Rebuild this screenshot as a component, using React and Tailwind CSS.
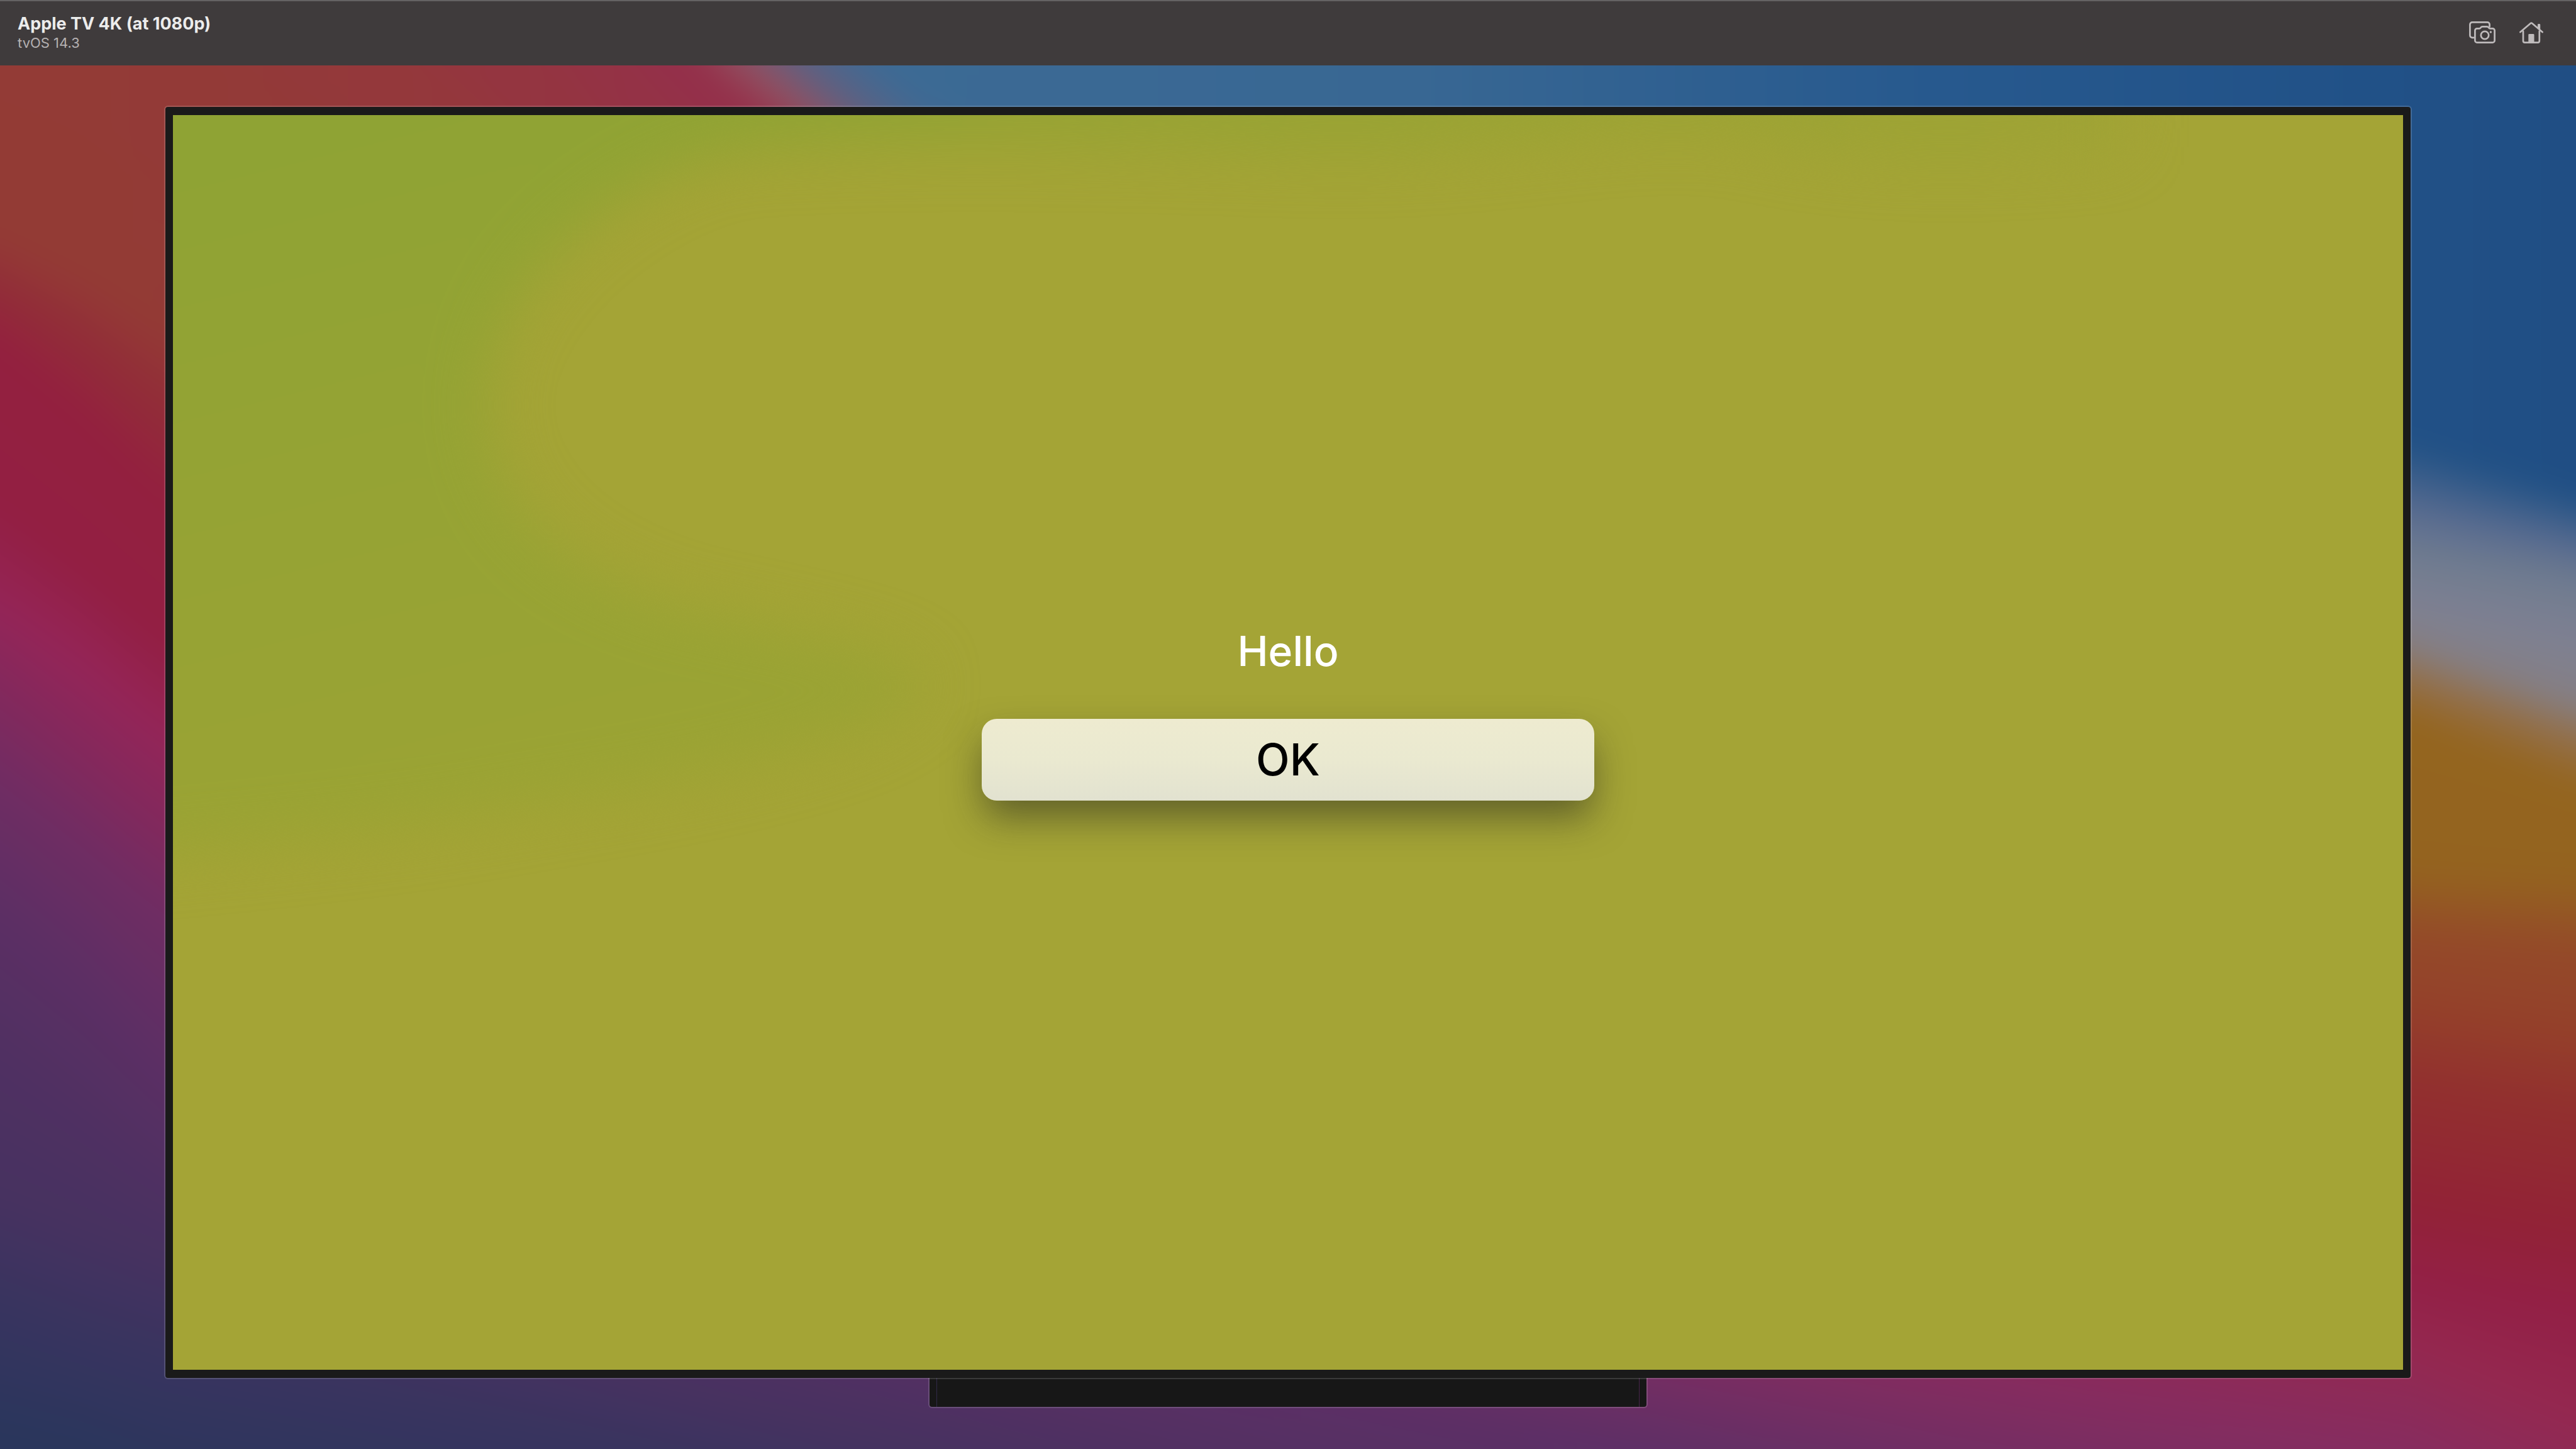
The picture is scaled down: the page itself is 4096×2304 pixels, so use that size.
import React from "react";

/* x positions at which every wallpaper contour has a height */
const COLUMNS = [-300, 0, 130, 261, 1150, 1475, 2620, 3835, 4096, 4400];

/* Each contour: heights at the columns between the outer two, then its
   colour at the left, in the middle and at the right. */
const CONTOURS = [
  [[-900, -900, -900, -109, 168, 500, 700, 785], "#3f6a94", "#3f6a94", "#225285"],
  [[-900, -900, -900, -11, 265, 560, 808, 868], "#5f6080", "#5f6080", "#5a6c90"],
  [[-900, -900, -900, 65, 341, 600, 880, 925], "#933c37", "#945060", "#707c8f"],
  [[-900, -900, -900, 133, 409, 650, 957, 1010], "#933c37", "#94304a", "#7e8092"],
  [[-900, -900, -900, 134, 410, 700, 1020, 1112], "#933c37", "#94304a", "#857f84"],
  [[-900, -900, -900, 135, 411, 750, 1075, 1172], "#933c37", "#94304a", "#936f4a"],
  [[-900, -900, -900, 136, 412, 800, 1140, 1245], "#933c37", "#94304a", "#94651f"],
  [[-900, -900, -900, 137, 413, 900, 1375, 1385], "#933c37", "#94304a", "#94631f"],
  [[-900, -900, -900, 138, 414, 1000, 1480, 1500], "#933c37", "#94304a", "#944a29"],
  [[370, 430, 510, 700, 800, 1250, 1600, 1640], "#933b35", "#933a34", "#943f2a"],
  [[450, 530, 635, 900, 1000, 1400, 1716, 1759], "#922d38", "#922d38", "#922f2f"],
  [[540, 650, 780, 1100, 1200, 1600, 1900, 1945], "#93203f", "#93203f", "#922236"],
  [[800, 900, 1010, 1350, 1450, 1850, 2026, 2078], "#931f43", "#931f43", "#932046"],
  [[960, 1050, 1160, 1550, 1650, 1980, 2134, 2240], "#942558", "#942558", "#942850"],
  [[1070, 1180, 1290, 1700, 1820, 2080, 2300, 2430], "#84285c", "#84285c", "#862d60"],
  [[1240, 1340, 1450, 1850, 1970, 2200, 2480, 2600], "#6e2d63", "#6e2d63", "#702f64"],
  [[1430, 1540, 1680, 1990, 2090, 2310, 2600, 2700], "#5c2f64", "#5c2f64", "#5c3068"],
  [[1650, 1750, 1860, 2120, 2210, 2500, 2800, 2900], "#503062", "#503062", "#503062"],
  [[1900, 1950, 2000, 2230, 2300, 2620, 2900, 3000], "#463260", "#463260", "#463260"],
  [[2060, 2110, 2150, 2330, 2420, 2700, 3000, 3100], "#38345f", "#38345f", "#38345f"],
  [[2260, 2290, 2340, 2500, 2600, 2800, 3100, 3200], "#2a365c", "#2a365c", "#2a365c"],
];

const STEPS = 6;

const mix = (a, b, t) => a + (b - a) * t;

function mixColor(a, b, t) {
  const part = (hex, i) => parseInt(hex.slice(i, i + 2), 16);
  const out = [1, 3, 5].map((i) => Math.round(mix(part(a, i), part(b, i), t)));
  return `rgb(${out.join(",")})`;
}

function buildBands() {
  const bands = [];
  CONTOURS.forEach((to, i) => {
    const from = CONTOURS[Math.max(i - 1, 0)];
    for (let s = 1; s <= STEPS; s++) {
      const t = s / STEPS;
      const inner = to[0].map((y, k) => mix(from[0][k], y, t));
      const ys = [inner[0] - 80, ...inner, inner[7] + 60];
      bands.push({
        d: `M-300 3400 ${ys.map((y, k) => `L${COLUMNS[k]} ${Math.round(y)}`).join(" ")} L4400 3400Z`,
        colors: [1, 2, 3].map((c) => mixColor(from[c], to[c], t)),
      });
    }
  });
  return bands;
}

const BANDS = buildBands();

function Wallpaper() {
  return (
    <svg
      className="absolute inset-0 size-full"
      viewBox="0 0 4096 2304"
      preserveAspectRatio="none"
      aria-hidden="true"
    >
      <defs>
        <filter
          id="soften"
          filterUnits="userSpaceOnUse"
          x="-300"
          y="-300"
          width="4700"
          height="2900"
          colorInterpolationFilters="sRGB"
        >
          <feGaussianBlur stdDeviation="24" />
        </filter>
        <linearGradient id="sky" gradientUnits="userSpaceOnUse" x1="0" y1="0" x2="4096" y2="0">
          <stop offset="0.34" stopColor="#3c6a94" />
          <stop offset="0.55" stopColor="#386793" />
          <stop offset="0.75" stopColor="#27598e" />
          <stop offset="0.92" stopColor="#215187" />
          <stop offset="1" stopColor="#204e84" />
        </linearGradient>
        {BANDS.map((band, i) => (
          <linearGradient key={i} id={`band-${i}`} gradientUnits="userSpaceOnUse" x1="0" y1="0" x2="4096" y2="0">
            <stop offset="0.02" stopColor={band.colors[0]} />
            <stop offset="0.25" stopColor={band.colors[1]} />
            <stop offset="0.35" stopColor={band.colors[1]} />
            <stop offset="0.93" stopColor={band.colors[2]} />
          </linearGradient>
        ))}
      </defs>
      <g filter="url(#soften)">
        <rect x="-300" y="-300" width="4700" height="2900" fill="url(#sky)" />
        {BANDS.map((band, i) => (
          <path key={i} d={band.d} fill={`url(#band-${i})`} />
        ))}
      </g>
    </svg>
  );
}

function ScreenGlow() {
  return (
    <svg
      className="absolute inset-0 size-full"
      viewBox="0 0 3546 1994"
      preserveAspectRatio="none"
      aria-hidden="true"
    >
      <defs>
        <filter
          id="glow"
          filterUnits="userSpaceOnUse"
          x="-300"
          y="-300"
          width="4200"
          height="2400"
          colorInterpolationFilters="sRGB"
        >
          <feGaussianBlur stdDeviation="44" />
        </filter>
        <linearGradient id="leaf" gradientUnits="userSpaceOnUse" x1="300" y1="0" x2="600" y2="1200">
          <stop offset="0" stopColor="#8fa334" />
          <stop offset="0.5" stopColor="#96a334" />
          <stop offset="1" stopColor="#9ca334" />
        </linearGradient>
        <linearGradient id="rim" gradientUnits="userSpaceOnUse" x1="600" y1="0" x2="3200" y2="0">
          <stop offset="0" stopColor="#94a334" />
          <stop offset="0.5" stopColor="#99a334" />
          <stop offset="1" stopColor="#9fa335" />
        </linearGradient>
      </defs>
      <g filter="url(#glow)">
        <path
          fill="url(#rim)"
          d="M600 -250H3100V50C2900 70 2700 80 2500 30C2300 0 2100 70 1800 60C1500 50 1200 40 900 60L600 100Z"
        />
        <path
          fill="url(#leaf)"
          d="M-250 -250H1500L1250 10C1050 25 880 40 740 120C570 220 500 350 500 470C510 620 610 720 800 780C960 820 1200 850 1190 910C1150 990 870 1050 560 1100C300 1150 100 1160 -250 1200Z"
        />
      </g>
    </svg>
  );
}

function ScreenshotIcon() {
  return (
    <svg
      className="h-9 w-[42px]"
      viewBox="0 0 42 36"
      fill="none"
      stroke="currentColor"
      strokeWidth="2.7"
      strokeLinecap="round"
      strokeLinejoin="round"
      aria-hidden="true"
    >
      <path d="M7.5 25.8H5A3.6 3.6 0 0 1 1.4 22.2V5A3.6 3.6 0 0 1 5 1.4H29A3.6 3.6 0 0 1 32.6 5V8.5" />
      <path d="M12.6 11.3H16.2C17.6 11.3 18 10.6 18.6 9.8C19.3 8.8 20 8.3 21.2 8.3H28.4C29.6 8.3 30.3 8.8 31 9.8C31.6 10.6 32 11.3 33.4 11.3H37.4A3.2 3.2 0 0 1 40.6 14.5V30.4A3.2 3.2 0 0 1 37.4 33.6H12.6A3.2 3.2 0 0 1 9.4 30.4V14.5A3.2 3.2 0 0 1 12.6 11.3Z" />
      <circle cx="25" cy="22" r="6.2" />
      <circle cx="34.4" cy="17" r="1.7" fill="currentColor" stroke="none" />
    </svg>
  );
}

function HomeIcon() {
  return (
    <svg
      className="h-9 w-[38px]"
      viewBox="0 0 38 36"
      fill="none"
      stroke="currentColor"
      strokeWidth="2.7"
      strokeLinecap="round"
      strokeLinejoin="round"
      aria-hidden="true"
    >
      <path d="M1.4 17L17.6 3.2Q19 2 20.4 3.2L36.6 17" />
      <path d="M6 15.5V31A2.6 2.6 0 0 0 8.6 33.6H29.2A2.6 2.6 0 0 0 31.8 31V15.5" />
      <path d="M29 5.2A1.2 1.2 0 0 1 30.2 4H32A1.2 1.2 0 0 1 33.2 5.2V14L29 10.4Z" fill="currentColor" stroke="none" />
      <path d="M14.3 34V21.4A1.4 1.4 0 0 1 15.7 20H22.1A1.4 1.4 0 0 1 23.5 21.4V34Z" fill="currentColor" stroke="none" />
    </svg>
  );
}

function TitleBar() {
  return (
    <header className="relative flex h-[104px] items-center justify-between border-t-2 border-[#646263] bg-[#3f3b3c] pr-[52px] pb-0.5 pl-7">
      <div>
        <h1 className="text-[27px] leading-8 font-bold text-[#ececec]">Apple TV 4K (at 1080p)</h1>
        <p className="text-[22px] leading-7 text-[#b5b1b2]">tvOS 14.3</p>
      </div>
      <div className="flex items-center gap-[38px] text-[#bfbbbc]">
        <button type="button" aria-label="Take screenshot">
          <ScreenshotIcon />
        </button>
        <button type="button" aria-label="Home">
          <HomeIcon />
        </button>
      </div>
    </header>
  );
}

function Alert() {
  return (
    <section
      role="alertdialog"
      aria-labelledby="alert-title"
      className="relative flex w-[974px] flex-col items-center gap-16 pb-24"
    >
      <h2 id="alert-title" className="text-[66px] leading-[88px] font-medium text-white">
        Hello
      </h2>
      <button
        type="button"
        className="h-[130px] w-full rounded-3xl bg-linear-to-b from-[#eeebd0] via-[#eae9d0] to-[#e2e2d0] text-[70px] leading-none font-medium text-black shadow-[0_30px_60px_-4px_rgba(30,30,30,0.5)]"
      >
        OK
      </button>
    </section>
  );
}

function Television() {
  return (
    <div className="relative flex w-full flex-col items-center">
      <div className="relative z-10 w-full rounded-md border-2 border-white/15 bg-[#1a1a1a] bg-clip-padding px-3 py-[13px]">
        <div className="relative flex aspect-video w-full items-center justify-center overflow-hidden bg-[#a4a436]">
          <ScreenGlow />
          <Alert />
        </div>
      </div>
      <div className="-mt-0.5 flex h-12 w-[32%] rounded-b-md border-2 border-t-0 border-white/15 bg-[#171717] bg-clip-padding px-[11px]">
        <div className="flex-1 border-x border-r-[#47244a] border-l-[#302a48]" />
      </div>
    </div>
  );
}

export default function App() {
  return (
    <div className="relative flex min-h-screen flex-col overflow-hidden bg-[#503062] font-['Inter',sans-serif]">
      <Wallpaper />
      <TitleBar />
      <main className="flex flex-1 flex-col px-[261px] pt-16">
        <Television />
      </main>
    </div>
  );
}
